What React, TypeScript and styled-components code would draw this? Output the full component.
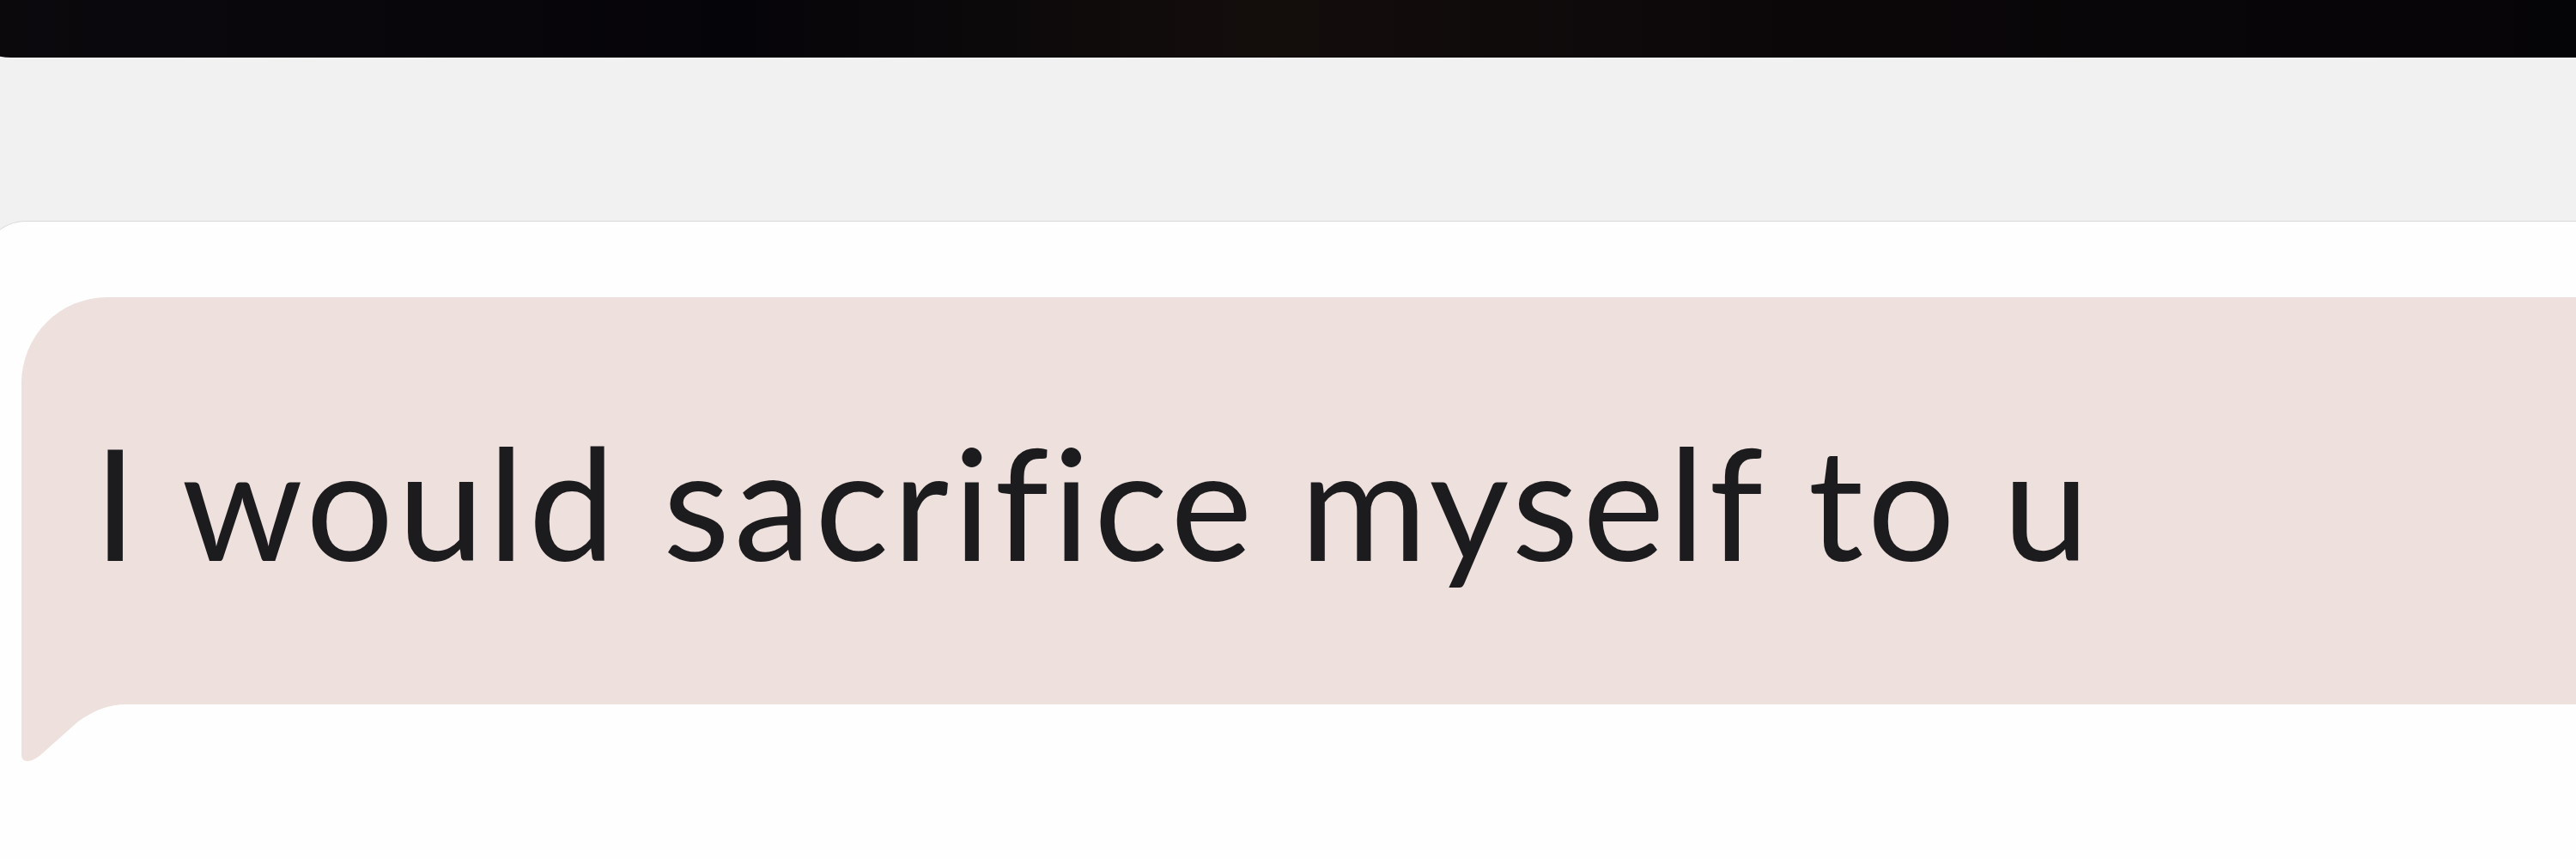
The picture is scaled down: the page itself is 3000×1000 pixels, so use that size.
import styled, { createGlobalStyle } from "styled-components";

const GlobalStyle = createGlobalStyle`
  html, body {
    margin: 0;
    padding: 0;
    background: #f1f1f2;
    overflow: hidden;
  }
  #root {
    height: 1000px;
  }
`;

const Screen = styled.div`
  display: flex;
  flex-direction: column;
  height: 1000px;
  width: 3000px;
  overflow: hidden;
  background: #f1f1f2;
`;

// dark header above, cut off by the top of the screenshot
const TopBar = styled.div`
  flex: 0 0 67px;
  margin-left: -54px;
  border-bottom-left-radius: 97px;
  background: linear-gradient(
    90deg,
    #0c090d 0%,
    #050408 30%,
    #130e0c 50%,
    #0b0709 70%,
    #050407 100%
  );
`;

const Gap = styled.div`
  flex: 0 0 190px;
`;

const Thread = styled.div`
  flex: 1;
  margin-left: -20px;
  padding: 88px 0 0 45px;
  background: #fffefe;
  border-top: 1px solid #d9d9da;
  border-top-left-radius: 50px;
`;

const Bubble = styled.div`
  position: relative;
  display: flex;
  align-items: center;
  height: 474px;
  padding-left: 84px;
  background: #ede0dd;
  border-top-left-radius: 100px;
`;

const Tail = styled.svg`
  position: absolute;
  left: 0;
  top: 100%;
  width: 130px;
  height: 70px;
`;

const Message = styled.span`
  font-family: Lato, "Open Sans", sans-serif;
  font-weight: 400;
  font-size: 180px;
  line-height: 1;
  letter-spacing: 4.8px;
  font-variant-ligatures: none;
  color: #1c1b1d;
  white-space: nowrap;
`;

export default function App() {
  return (
    <Screen>
      <GlobalStyle />
      <TopBar />
      <Gap />
      <Thread>
        <Bubble>
          <Message>I would sacrifice myself to u</Message>
          <Tail viewBox="0 0 130 70">
            <path
              d="M0 0 H122 C102 0 86 6 66 20 L22 59 C13 67 0 70 0 58 Z"
              fill="#ede0dd"
            />
          </Tail>
        </Bubble>
      </Thread>
    </Screen>
  );
}
